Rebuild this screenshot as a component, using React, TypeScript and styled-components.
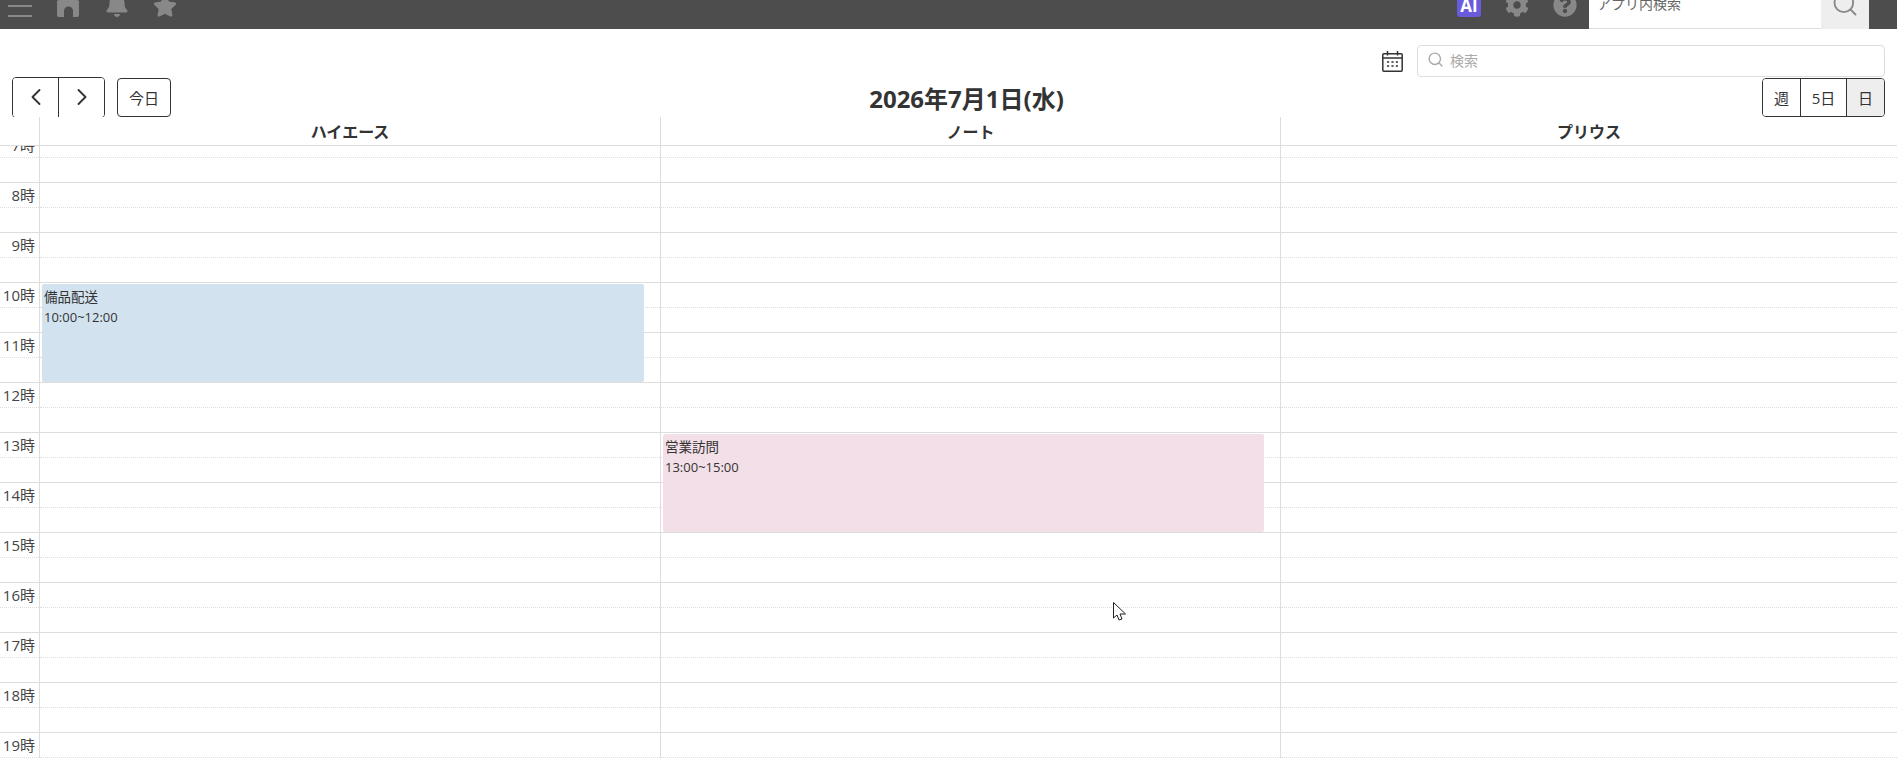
import React from 'react';
import styled, { createGlobalStyle } from 'styled-components';
import { FaBell, FaCog, FaQuestionCircle, FaStar } from 'react-icons/fa';
import { FiChevronLeft, FiChevronRight, FiSearch } from 'react-icons/fi';

const GlobalStyle = createGlobalStyle`
  html, body {
    margin: 0;
    height: 100%;
    overflow: hidden;
    background: #fff;
    color: #333;
    font-family: "Open Sans", "Noto Sans CJK JP", sans-serif;
  }
  * { box-sizing: border-box; }
`;

const Page = styled.div`
  position: relative;
  display: flex;
  flex-direction: column;
  height: 758px;
  overflow: hidden;
`;

// === Top bar ===
const TopBar = styled.header`
  display: flex;
  flex: none;
  align-items: flex-end;
  justify-content: space-between;
  height: 29px;
  padding-left: 8px;
  padding-right: 28px;
  background: #4d4d4d;
  overflow: hidden;
`;

const TopRight = styled.div`
  display: flex;
  align-items: flex-end;
  gap: 12px;
`;

const IconGroup = styled.div`
  display: flex;
  align-items: flex-end;
  gap: 24px;
  height: 29px;
  padding-bottom: 12px;
  color: #888;
`;

const Burger = styled.span`
  display: block;
  flex: none;
  width: 24px;
  height: 12px;
  margin-right: 1px;
  border-top: 2px solid #888;
  border-bottom: 2px solid #888;
`;

const StarIcon = styled(FaStar)`
  margin-bottom: -1px;
`;

const AiBadge = styled.span`
  display: flex;
  flex: none;
  align-items: flex-end;
  justify-content: center;
  width: 24px;
  height: 24px;
  padding-bottom: 3px;
  border-radius: 3px;
  background: #6a5bdc;
  color: #fff;
  font-size: 17px;
  font-weight: 700;
  line-height: 17px;
`;

const SearchArea = styled.div`
  display: flex;
  height: 29px;
`;

const AppSearch = styled.div`
  display: flex;
  align-items: flex-end;
  width: 232px;
  height: 29px;
  padding-left: 8px;
  padding-bottom: 17px;
  border-bottom: 1px solid #ddd;
  background: #fff;
  color: #666;
  font-size: 14px;
  line-height: 14px;
`;

const AppSearchButton = styled.div`
  display: flex;
  align-items: flex-end;
  justify-content: center;
  width: 48px;
  height: 29px;
  padding-bottom: 11px;
  background: #eee;
  color: #888;
`;

// === Toolbar ===
const FilterRow = styled.div`
  display: flex;
  flex: none;
  align-items: center;
  justify-content: flex-end;
  gap: 14px;
  height: 48px;
  padding: 16px 12px 0 0;
`;

const SearchBox = styled.div`
  display: flex;
  align-items: center;
  gap: 6px;
  width: 468px;
  height: 32px;
  padding: 0 0 3px 9px;
  border: 1px solid #ddd;
  border-radius: 4px;
  color: #aaa;
  font-size: 14px;
`;

const NavRow = styled.div`
  display: flex;
  flex: none;
  align-items: flex-end;
  justify-content: space-between;
  height: 40px;
  padding: 0 12px;
`;

const NavLeft = styled.div`
  display: flex;
  align-items: flex-end;
  gap: 12px;
`;

const ButtonGroup = styled.div<{ $height: number; $under?: boolean }>`
  display: flex;
  height: ${p => p.$height}px;
  margin-bottom: ${p => (p.$under ? -1 : 0)}px;
  border: 1px solid #333;
  border-radius: 4px;
  overflow: hidden;
`;

const GroupButton = styled.div<{ $width: number; $active?: boolean }>`
  display: flex;
  align-items: center;
  justify-content: center;
  width: ${p => p.$width}px;
  padding-bottom: 1px;
  background: ${p => (p.$active ? '#eee' : '#fff')};
  font-size: 15px;
  & + & { border-left: 1px solid #333; }
`;

const TodayButton = styled.div`
  display: flex;
  align-items: center;
  justify-content: center;
  width: 54px;
  height: 39px;
  padding-bottom: 1px;
  border: 1px solid #333;
  border-radius: 4px;
  font-size: 15px;
`;

const Title = styled.h1`
  margin: 0 0 1px;
  font-size: 24px;
  font-weight: 700;
  line-height: 34px;
`;

// === Calendar ===
const calendarColumns = '40px 621px 620px 1fr';

const HeaderRow = styled.div`
  position: relative;
  display: grid;
  flex: none;
  grid-template-columns: ${calendarColumns};
  height: 29px;
  border-bottom: 1px solid #ddd;
  background: #fff;
`;

const HeaderCell = styled.div`
  border-right: 1px solid #ddd;
  font-size: 16px;
  font-weight: 700;
  line-height: 30px;
  text-align: center;
  &:last-child { border-right: 0; }
`;

const Body = styled.div`
  flex: 1;
  min-height: 0;
  overflow: hidden;
`;

const BodyGrid = styled.div`
  display: grid;
  grid-template-columns: ${calendarColumns};
  margin-top: -13px;
`;

const Column = styled.div`
  position: relative;
  border-right: 1px solid #ddd;
  &:last-child { border-right: 0; }
`;

const Slot = styled.div`
  position: relative;
  height: 50px;
  padding-right: 4px;
  border-bottom: 1px solid #ddd;
  color: #444;
  font-size: 15px;
  line-height: 25px;
  text-align: right;
  &::after {
    content: '';
    position: absolute;
    left: 0;
    right: 0;
    top: 24px;
    border-top: 1px dotted #ddd;
  }
`;

const EventCard = styled.div<{ $top: number; $color: string }>`
  position: absolute;
  z-index: 1;
  top: ${p => p.$top}px;
  left: 2px;
  right: 16px;
  height: 98px;
  padding: 3px 2px;
  border-radius: 2px;
  background: ${p => p.$color};
  color: #333;
  font-size: 13px;
  line-height: 20px;
`;

const EventTitle = styled.div`
  font-size: 13.5px;
`;

const Cursor = styled.svg`
  position: absolute;
  left: 1113px;
  top: 602px;
`;

const hours = Array.from({ length: 13 }, (_, i) => i + 7);

const resources = [
  { name: 'ハイエース', event: { title: '備品配送', time: '10:00~12:00', start: 10, color: '#d2e3ef' } },
  { name: 'ノート', event: { title: '営業訪問', time: '13:00~15:00', start: 13, color: '#f3dfe7' } },
  { name: 'プリウス', event: null },
];

const HomeIcon = () => (
  <svg width="24" height="24" viewBox="0 0 24 24" fill="currentColor">
    <path d="M11 0L22 8V22a2 2 0 0 1-2 2H16V18a4.500 4.500 0 0 0-9 0V24H2a2 2 0 0 1-2-2V8Z" />
  </svg>
);

const CalendarIcon = () => (
  <svg width="21" height="21" viewBox="0 0 21 21" fill="none" stroke="#333" strokeWidth="1.5">
    <rect x="0.800" y="2.800" width="19.400" height="17.400" rx="1" />
    <path d="M1 7h19M5.500 0v4.500M15.500 0v4.500" />
    <path d="M5 11h2.200M9.400 11h2.200M13.800 11h2.200M5 15h2.200M9.400 15h2.200M13.800 15h2.200" strokeWidth="1.6" />
  </svg>
);

export default function App() {
  return (
    <Page>
      <GlobalStyle />
      <TopBar>
        <IconGroup>
          <Burger />
          <HomeIcon />
          <FaBell size={24} />
          <StarIcon size={24} />
        </IconGroup>
        <TopRight>
          <IconGroup>
            <AiBadge>AI</AiBadge>
            <FaCog size={24} />
            <FaQuestionCircle size={24} />
          </IconGroup>
          <SearchArea>
            <AppSearch>アプリ内検索</AppSearch>
            <AppSearchButton>
              <FiSearch size={28} strokeWidth={1.6} />
            </AppSearchButton>
          </SearchArea>
        </TopRight>
      </TopBar>

      <FilterRow>
        <CalendarIcon />
        <SearchBox>
          <FiSearch size={17} color="#aaa" />
          検索
        </SearchBox>
      </FilterRow>

      <NavRow>
        <NavLeft>
          <ButtonGroup $height={41} $under>
            <GroupButton $width={45}><FiChevronLeft size={28} strokeWidth={1.6} /></GroupButton>
            <GroupButton $width={46}><FiChevronRight size={28} strokeWidth={1.6} /></GroupButton>
          </ButtonGroup>
          <TodayButton>今日</TodayButton>
        </NavLeft>
        <Title>2026年7月1日(水)</Title>
        <ButtonGroup $height={39}>
          <GroupButton $width={37}>週</GroupButton>
          <GroupButton $width={46}>5日</GroupButton>
          <GroupButton $width={38} $active>日</GroupButton>
        </ButtonGroup>
      </NavRow>

      <HeaderRow>
        <HeaderCell />
        {resources.map(r => <HeaderCell key={r.name}>{r.name}</HeaderCell>)}
      </HeaderRow>

      <Body>
        <BodyGrid>
          <Column>
            {hours.map(h => <Slot key={h}>{h}時</Slot>)}
          </Column>
          {resources.map(r => (
            <Column key={r.name}>
              {hours.map(h => <Slot key={h} />)}
              {r.event && (
                <EventCard $top={(r.event.start - 7) * 50 + 1} $color={r.event.color}>
                  <EventTitle>{r.event.title}</EventTitle>
                  {r.event.time}
                </EventCard>
              )}
            </Column>
          ))}
        </BodyGrid>
      </Body>

      <Cursor width="14" height="19" viewBox="0 0 14 19">
        <path d="M.5.5V16L4 13l2 5 3-1-2-5h5.500z" fill="#fff" stroke="#222" />
      </Cursor>
    </Page>
  );
}
